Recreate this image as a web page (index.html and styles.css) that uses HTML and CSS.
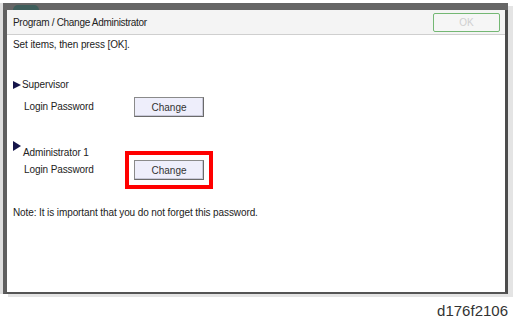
FILE: index.html
```html
<!DOCTYPE html>
<html lang="en">
<head>
  <meta charset="UTF-8">
  <title>Program / Change Administrator</title>
  <link rel="stylesheet" href="styles.css">
</head>
<body>
  <div class="screen">
    <div class="topbar"><span class="knob"></span></div>
    <div class="frame">
      <div class="header">
        <span class="title">Program / Change Administrator</span>
        <button class="ok" disabled>OK</button>
      </div>
      <div class="content">
        <p class="intro">Set items, then press [OK].</p>

        <div class="group supervisor">
          <div class="group-title"><span class="arrow"></span>Supervisor</div>
          <div class="row">
            <span class="label">Login Password</span>
            <button class="change">Change</button>
          </div>
        </div>

        <div class="group admin">
          <div class="group-title"><span class="arrow raised"></span>Administrator 1</div>
          <div class="row">
            <span class="label">Login Password</span>
            <button class="change marked">Change</button>
          </div>
        </div>

        <p class="note">Note: It is important that you do not forget this password.</p>
      </div>
    </div>
  </div>
  <div class="caption">d176f2106</div>
</body>
</html>
```
FILE: styles.css
```css
/* Page */
body {
  margin: 0;
  background-color: #ffffff;
  font-family: "Liberation Sans", Arial, sans-serif;
  color: #222;
}

.screen {
  margin-top: 3px;
  margin-left: 3px;
  width: 505px;
  box-shadow: 5px 3px 0 #e4e4e4, -3px 0 0 #dedede;
  background-color: #e4e4e4;
}

.topbar {
  height: 7px;
  background-color: #666666;
  padding-left: 10px;
  display: flex;
  align-items: flex-end;
}

.knob {
  width: 26px;
  height: 5px;
  border-radius: 13px 13px 0 0;
  background-color: #3f5f5c;
}

.frame {
  height: 282px;
  border-left: 4px solid #5e5e5e;
  border-right: 3px solid #4c4c4c;
  border-bottom: 2px solid #555;
  background-color: #ffffff;
}

/* Header */
.header {
  height: 24px;
  background-color: #f4f4f4;
  border-bottom: 1px solid #cfcfcf;
  display: flex;
  align-items: center;
  justify-content: space-between;
  padding: 0 5px 0 6px;
}

.title {
  font-size: 10px;
  letter-spacing: -0.3px;
  color: #222;
}

.ok {
  width: 67px;
  height: 19px;
  margin-top: 1px;
  border: 1px solid #74b874;
  border-radius: 2px;
  background-color: #f6f6f6;
  color: #d0d0d0;
  font-family: inherit;
  font-size: 10px;
  padding: 0;
}

/* Content */
.content {
  padding: 4px 6px 0 6px;
  font-size: 10px;
  line-height: 12px;
  letter-spacing: -0.1px;
}

.intro {
  margin: 0;
}

.group-title {
  height: 12px;
  display: flex;
  align-items: center;
}

.supervisor {
  margin-top: 28px;
}

.supervisor .row {
  margin-top: 6px;
}

.admin {
  margin-top: 30px;
}

.admin .row {
  margin-top: 1px;
}

.arrow {
  width: 0;
  height: 0;
  border-top: 4px solid transparent;
  border-bottom: 4px solid transparent;
  border-left: 8px solid #15154a;
  margin-right: 1px;
}

.arrow.raised {
  border-top-width: 5px;
  border-bottom-width: 5px;
  align-self: flex-start;
  margin-top: -6px;
  margin-right: 2px;
}

.row {
  display: flex;
  align-items: center;
  height: 20px;
}

.label {
  width: 110px;
  padding-left: 11px;
}

.change {
  width: 70px;
  height: 20px;
  padding: 0;
  border: 1px solid #8a8a8a;
  border-right-color: #6a6a6a;
  border-bottom-color: #6a6a6a;
  border-radius: 0;
  background-color: #eeeefb;
  box-shadow: inset -1px -1px 0 #c8c8d8;
  color: #333;
  font-family: inherit;
  font-size: 10px;
}

.change.marked {
  outline: 4px solid #ff0000;
  outline-offset: 5px;
}

.note {
  margin: 27px 0 0 0;
}

/* Figure caption */
.caption {
  margin-top: 8px;
  padding-right: 5px;
  text-align: right;
  font-size: 15px;
  color: #333;
}
```
